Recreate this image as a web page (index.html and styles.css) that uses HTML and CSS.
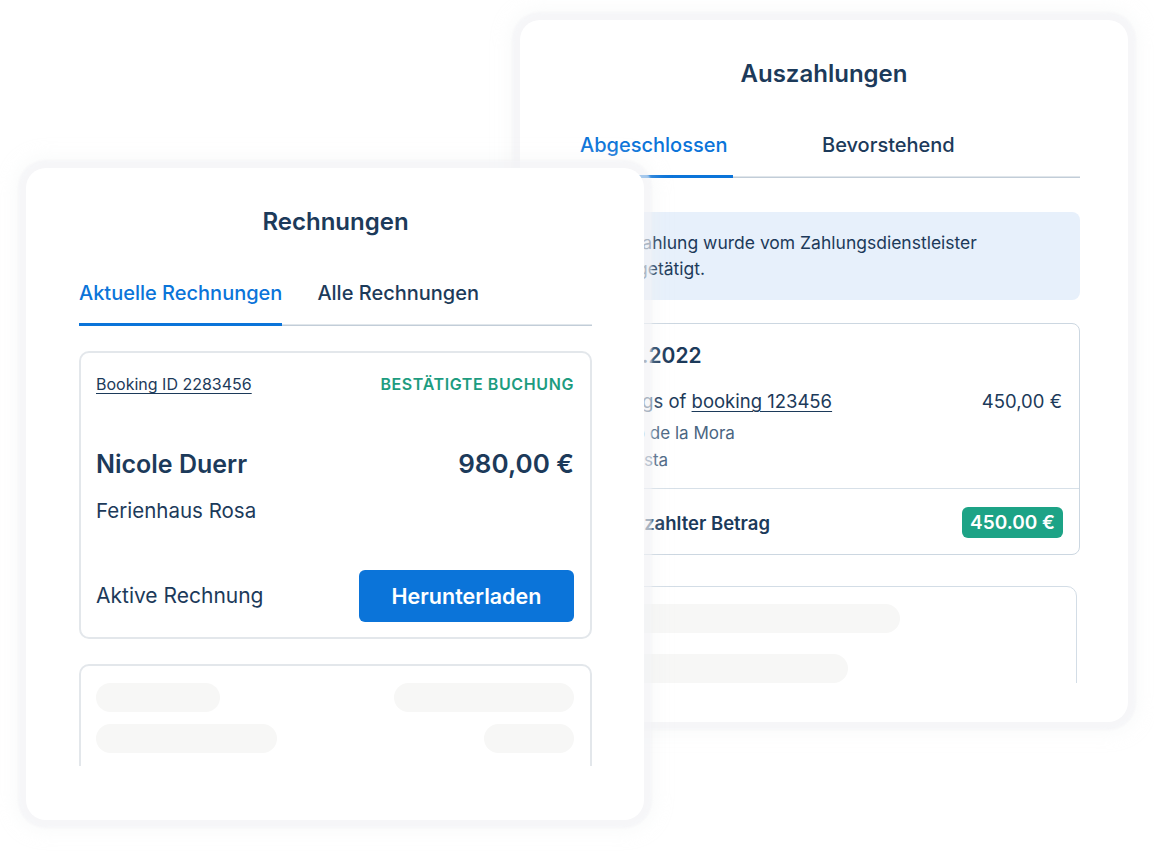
FILE: index.html
```html
<!DOCTYPE html>
<html lang="de">
<head>
<meta charset="utf-8">
<title>Rechnungen & Auszahlungen</title>
<link rel="stylesheet" href="styles.css">
</head>
<body>
<div class="stage">
  <section class="card card-back">
    <h2 class="card-title">Auszahlungen</h2>
    <nav class="tabs tabs-back">
      <span class="tab tab-done active">Abgeschlossen</span>
      <span class="tab tab-next">Bevorstehend</span>
    </nav>
    <div class="viewport viewport-back">
      <div class="info">Die Auszahlung wurde vom Zahlungsdienstleister gestern getätigt.</div>
      <div class="payout">
        <div class="payout-main">
          <div class="payout-date">01.07.2022</div>
          <div class="payout-row">
            <span>Earnings of <a class="link" href="#">booking 123456</a></span>
            <span>450,00 €</span>
          </div>
          <div class="payout-sub">Palacio de la Mora</div>
          <div class="payout-sub payout-sub2">Vila Costa</div>
        </div>
        <div class="payout-total">
          <span class="total-label">Ausgezahlter Betrag</span>
          <span class="badge">450.00 €</span>
        </div>
      </div>
      <div class="skeleton-card skeleton-back">
        <div class="bar bar-b1"></div>
        <div class="bar bar-b2"></div>
      </div>
    </div>
  </section>

  <section class="card card-front">
    <h2 class="card-title">Rechnungen</h2>
    <nav class="tabs tabs-front">
      <span class="tab active">Aktuelle Rechnungen</span>
      <span class="tab tab-all">Alle Rechnungen</span>
    </nav>
    <div class="viewport viewport-front">
      <article class="invoice">
        <div class="invoice-top">
          <a class="link booking-id" href="#">Booking ID 2283456</a>
          <span class="status">Bestätigte Buchung</span>
        </div>
        <div class="invoice-name">
          <span>Nicole Duerr</span>
          <span class="price">980,00 €</span>
        </div>
        <div class="invoice-house">Ferienhaus Rosa</div>
        <div class="invoice-foot">
          <span class="invoice-state">Aktive Rechnung</span>
          <button class="btn">Herunterladen</button>
        </div>
      </article>
      <div class="skeleton-card skeleton-front">
        <div class="sk-row">
          <div class="bar bar-f1"></div>
          <div class="bar bar-f2"></div>
        </div>
        <div class="sk-row">
          <div class="bar bar-f3"></div>
          <div class="bar bar-f4"></div>
        </div>
      </div>
    </div>
  </section>
</div>
</body>
</html>
```

FILE: styles.css
```css
* { box-sizing: border-box; }
html, body { margin: 0; padding: 0; background: #ffffff; }
body {
  font-family: Inter, "Noto Sans", "Liberation Sans", sans-serif;
  color: #1c3a5a;
  width: 1154px;
  height: 852px;
  overflow: hidden;
}
.stage { position: relative; width: 1154px; height: 852px; }

.card {
  position: absolute;
  background: #ffffff;
  border-radius: 20px;
  box-shadow: 0 0 2px 8px rgba(242, 243, 245, 0.55), 0 0 18px 11px rgba(238, 240, 242, 0.35);
}
.card-back { left: 520px; top: 20px; width: 608px; height: 702px; padding: 40px 48px 0 48px; }
.card-front { left: 26px; top: 168px; width: 618px; height: 652px; padding: 40px 52px 0 53px; }

.card-title {
  margin: 0;
  text-align: center;
  font-size: 24px;
  line-height: 28px;
  font-weight: 600;
  color: #1c3a5a;
}

.tabs {
  display: flex;
  margin-top: 45px;
  box-shadow: inset 0 -1.5px 0 #c2cdd8;
}
.tab {
  font-size: 20px;
  line-height: 24px;
  font-weight: 500;
  color: #1c3a5a;
  padding-bottom: 18px;
  border-bottom: 3px solid transparent;
}
.tab.active { color: #0b74d9; border-bottom-color: #0b74d9; }
.tab-all { margin-left: 35px; }
.tab-done { width: 165px; padding-left: 12px; }
.tab-next { margin-left: 89px; }

.viewport { overflow: hidden; }
.viewport-front { height: 440px; }
.viewport-back { height: 505px; }

.link { color: #1c3a5a; text-decoration: underline; text-underline-offset: 3px; text-decoration-thickness: 1px; }

/* front card */
.invoice {
  margin-top: 25px;
  border: 2px solid #e3e7eb;
  border-radius: 10px;
  padding: 21px 16px 15px 15px;
}
.invoice-top {
  display: flex;
  justify-content: space-between;
  font-size: 16px;
  line-height: 20px;
}
.status {
  text-transform: uppercase;
  color: #1d9c7f;
  font-weight: 600;
  letter-spacing: 0.6px;
}
.invoice-name {
  display: flex;
  justify-content: space-between;
  margin-top: 55px;
  font-size: 25px;
  line-height: 30px;
  font-weight: 600;
}
.price { font-size: 26px; }
.invoice-house {
  margin-top: 19px;
  font-size: 20.5px;
  line-height: 26px;
}
.invoice-foot {
  display: flex;
  justify-content: space-between;
  align-items: center;
  margin-top: 46px;
}
.invoice-state { font-size: 21px; line-height: 26px; }
.btn {
  width: 215px;
  height: 52px;
  border: 0;
  border-radius: 6px;
  background: #0b74d9;
  color: #ffffff;
  font-family: inherit;
  font-size: 21.5px;
  font-weight: 600;
}

.skeleton-card {
  border: 2px solid #e3e7eb;
  border-radius: 10px;
}
.skeleton-front { margin-top: 25px; padding: 17px 16px 40px 15px; }
.sk-row { display: flex; justify-content: space-between; }
.sk-row + .sk-row { margin-top: 12px; }
.bar { height: 29px; border-radius: 15px; background: #f7f7f6; }
.bar-f1 { width: 124px; }
.bar-f2 { width: 180px; }
.bar-f3 { width: 181px; }
.bar-f4 { width: 90px; }

/* back card */
.info {
  margin-top: 34px;
  background: #e7f0fb;
  border-radius: 8px;
  padding: 18px 60px 18px 1px;
  font-size: 17.5px;
  line-height: 26px;
}
.payout {
  margin-top: 23px;
  border: 1px solid #ccd7e1;
  border-radius: 8px;
}
.payout-main { padding: 20px 17px 16px 18px; border-bottom: 1px solid #d7e0e8; }
.payout-date { font-size: 21px; line-height: 24px; font-weight: 600; padding-left: 3px; }
.payout-row {
  display: flex;
  justify-content: space-between;
  margin-top: 21px;
  font-size: 18.5px;
  line-height: 24px;
}
.payout-sub { margin-top: 8px; font-size: 17px; line-height: 24px; color: #4a6582; }
.payout-sub:first-of-type { letter-spacing: -0.3px; }
.payout-sub2 { margin-top: 3px; }
.payout-total {
  display: flex;
  justify-content: space-between;
  align-items: center;
  padding: 18px 16px 16px 18px;
}
.total-label { font-size: 18.5px; font-weight: 600; }
.badge {
  background: #1da386;
  color: #ffffff;
  font-size: 19px;
  font-weight: 600;
  line-height: 31px;
  height: 31px;
  padding: 0 8px;
  border-radius: 6px;
}
.skeleton-back {
  margin-top: 31px;
  margin-right: 3px;
  border: 1px solid #d3dde6;
  padding: 17px 18px 40px;
}
.bar-b1 { width: 313px; }
.bar-b2 { width: 261px; margin-top: 21px; }
```
